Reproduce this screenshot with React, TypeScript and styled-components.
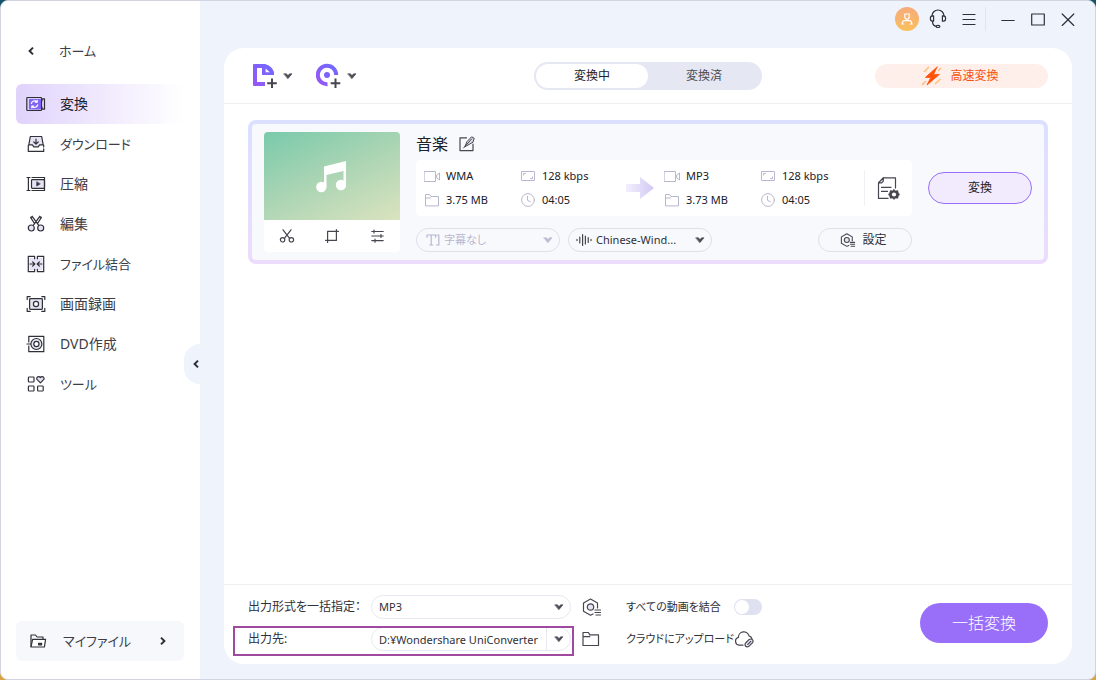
import React, { useState } from "react";
import styled, { createGlobalStyle, css } from "styled-components";

const ink = "#2f3038";
const faint = "#b9b6cf";
const violet = "#996ffa";

const GlobalStyle = createGlobalStyle`
  * { box-sizing: border-box; }
  html, body { margin: 0; }
  body {
    background: linear-gradient(#155468 0 50%, #d9a344 50% 100%);
    color: ${ink};
    font: 12px/16px "Noto Sans", "Noto Sans CJK JP", sans-serif;
    font-feature-settings: "palt";
  }
  button, select, input { font: inherit; color: inherit; font-feature-settings: inherit; }
  button { background: none; border: 0; padding: 0; cursor: pointer; }
  svg { display: block; flex: none; }
  a { color: inherit; text-decoration: none; }
`;

/* ---------- icons ---------- */

type IconProps = { w: number; h: number; color?: string; sw?: number; children: React.ReactNode };

const Icon = ({ w, h, color = ink, sw = 1.2, children }: IconProps) => (
  <svg
    width={w}
    height={h}
    viewBox={`0 0 ${w} ${h}`}
    fill="none"
    stroke={color}
    strokeWidth={sw}
    strokeLinecap="round"
    strokeLinejoin="round"
    aria-hidden="true"
  >
    {children}
  </svg>
);

const tint = "#e6e4f4";

const ConvertIcon = () => (
  <Icon w={20} h={16}>
    <rect x="0.8" y="1.5" width="14.7" height="13" rx="0.8" fill="#d9d0fb" />
    <rect x="3" y="3" width="12" height="10.5" rx="1" fill="#8265f2" stroke="none" />
    <path d="M5.4 7.4a3.2 3 0 0 1 5.6-1.5M11.2 4.4v1.8H9.4M11.6 8.8A3.2 3 0 0 1 6 10.3M5.8 11.8V10h1.8" stroke="#fff" />
    <path d="M15.5 5.5l1-2.7h2V13.2h-2l-1-2.7" />
  </Icon>
);
const DownloadIcon = () => (
  <Icon w={18} h={18}>
    <path d="M3.3 1.5h11.4l1.5 8.3h-3.6l-1.4 2H6.8l-1.4-2H1.8z" fill={tint} />
    <path d="M9 4v5M6.8 7L9 9.2 11.2 7" />
    <path d="M1.3 10v6.4h15.4v-2.6M16.7 12V10" />
  </Icon>
);
const CompressIcon = () => (
  <Icon w={20} h={16}>
    <path d="M1 1.5h3M1 14.5h3M2.4 1.5v13M6 1.5h12M6 14.5h12" />
    <rect x="5.5" y="3.6" width="13" height="8.8" rx="0.8" fill={tint} />
    <path d="M18.5 1.5v13" />
    <path d="M10.7 5.9v4.2L14 8z" fill={ink} strokeWidth="0.6" />
  </Icon>
);
const ScissorsIcon = () => (
  <Icon w={18} h={18}>
    <path d="M5.2 1.4l6.7 9.2M12.8 1.4L6.1 10.6M3.6 2.4l4 6.4M14.4 2.4l-4 6.4M5.2 1.4L3.6 2.4M12.8 1.4l1.6 1" />
    <circle cx="4.3" cy="13" r="3" fill={tint} />
    <circle cx="13.7" cy="13" r="3" fill={tint} />
  </Icon>
);
const MergeIcon = () => (
  <Icon w={18} h={18}>
    <rect x="2.5" y="3" width="13" height="12" fill={tint} stroke="none" />
    <path d="M7.6 3.7V1.3H1.3v15.4h6.3v-2.4M10.4 3.7V1.3h6.3v15.4h-6.3v-2.4" />
    <path d="M3 9h4.4M5.6 6.8L7.8 9l-2.2 2.2M15 9h-4.4M12.4 6.8L10.2 9l2.2 2.2" />
  </Icon>
);
const RecordIcon = () => (
  <Icon w={20} h={18}>
    <rect x="3.6" y="3.6" width="12.8" height="10.8" rx="0.8" fill={tint} />
    <circle cx="10" cy="9" r="2.6" fill="#fff" />
    <path d="M1.2 4.6V1.6h3M15.8 1.6h3v3M18.8 13.4v3h-3M4.2 16.4h-3v-3" />
  </Icon>
);
const DiscIcon = () => (
  <Icon w={20} h={18}>
    <path d="M2.8 7V1.3h15v15.4h-15V11" />
    <circle cx="10.4" cy="9" r="5.5" fill={tint} />
    <circle cx="10.4" cy="9" r="2.6" fill="#fff" />
    <path d="M1 9h3.4" />
  </Icon>
);
const ToolsIcon = () => (
  <Icon w={18} h={18}>
    <rect x="1.4" y="2" width="5.6" height="5" rx="0.8" />
    <rect x="1.4" y="11" width="5.6" height="5" rx="0.8" />
    <rect x="10.6" y="11" width="5.6" height="5" rx="0.8" />
    <path d="M13.4 7.8L10 4.4c-.8-1.4.3-2.8 1.7-2.8.8 0 1.4.5 1.7 1 .3-.5.9-1 1.7-1 1.4 0 2.5 1.4 1.7 2.8z" fill={tint} />
  </Icon>
);
const OpenFolderIcon = () => (
  <Icon w={18} h={16}>
    <path d="M2 13.5V2h4.5l1.6 2H14v2.2" />
    <path d="M2 14l1.6-7.6h13L15.4 14z" fill="#fff" />
    <path d="M9.6 10.4h3v1.4h-3z" fill={ink} />
  </Icon>
);
const Chevron = ({ dir }: { dir: "left" | "right" }) => (
  <Icon w={8} h={10} sw={2}>
    <path d={dir === "left" ? "M6 1.6L2.600 5 6 8.400" : "M2 1.600L5.400 5 2 8.400"} strokeLinecap="butt" strokeLinejoin="miter" />
  </Icon>
);
const Caret = ({ color = "#45464f" }: { color?: string }) => (
  <Icon w={10} h={8} color={color} sw={0.6}>
    <path d="M1 1.8h2.2L5 3.4l1.8-1.6H9L5 6.6z" fill={color} />
  </Icon>
);
const AddFileIcon = () => (
  <Icon w={26} h={26} color="#8a5cf6" sw={4}>
    <defs>
      <linearGradient id="violetBlue" x1="0" y1="1" x2="1" y2="0">
        <stop offset="0" stopColor="#9a55f6" />
        <stop offset="1" stopColor="#6d6bff" />
      </linearGradient>
    </defs>
    <path d="M1 2q0-1 1-1h11q7 2 9 8v3h-12V5H5v14h8v4H2q-1 0-1-1z" fill="url(#violetBlue)" stroke="none" />
    <path d="M13.6 5.6v3.6h4.2z" fill="#fff" stroke="none" />
    <path d="M20 15.5v9.5M15.2 20.2h9.6" stroke="#45464f" strokeWidth="2" strokeLinecap="butt" />
  </Icon>
);
const AddDiscIcon = () => (
  <Icon w={26} h={26} sw={4}>
    <path d="M11.500 21.2A9.200 9.200 0 1 1 20.200 12" stroke="url(#violetBlue)" strokeLinecap="butt" />
    <circle cx="11" cy="12" r="3" fill="#7d62fa" stroke="none" />
    <path d="M19.500 15.5v9.5M14.700 20.2h9.6" stroke="#45464f" strokeWidth="2" strokeLinecap="butt" />
  </Icon>
);
const BoltIcon = () => (
  <Icon w={20} h={20}>
    <path d="M15 1L3.4 11.4h5.4L5 19 17.4 8.4h-5.6z" fill="#ff5208" stroke="#ff5208" strokeWidth="0.800" />
    <path d="M6.5 1.5l-4 4M18.5 2.5l-2 2M18 13.5l-4.5 4M3.5 15.5l-3 3" stroke="#ffbe7d" strokeWidth="1.6" />
  </Icon>
);
const UserIcon = () => (
  <Icon w={12} h={12} color="#fff">
    <path d="M3.8 1h4.4v3.6L7 6.2H5L3.8 4.6zM1.2 11c0-2.2.8-3.4 2.6-3.4h4.4c1.8 0 2.6 1.2 2.6 3.4M.8 11h2M9.2 11h2" />
  </Icon>
);
const HeadsetIcon = () => (
  <Icon w={18} h={20}>
    <path d="M3 7.2V6.8a6 5.8 0 0 1 12 0v.4" />
    <path d="M4.6 6.8v5.4H3.4a2 2.7 0 0 1 0-5.4zM13.4 6.8v5.4h1.2a2 2.7 0 0 0 0-5.4z" />
    <path d="M3.4 12.400c.2 3 1.800 4.800 4 5" />
    <ellipse cx="9" cy="17.4" rx="1.9" ry="1.1" />
  </Icon>
);
const MenuIcon = () => (
  <Icon w={14} h={13}>
    <path d="M1 1.500h12M1 6.500h12M1 11.500h12" />
  </Icon>
);
const MinimizeIcon = () => (
  <Icon w={14} h={14}>
    <path d="M.8 8.5h12.400" />
  </Icon>
);
const MaximizeIcon = () => (
  <Icon w={14} h={14}>
    <rect x="0.7" y="2" width="12.6" height="11" />
  </Icon>
);
const CloseIcon = () => (
  <Icon w={14} h={14}>
    <path d="M1.2 2l11.600 11.500M12.800 2L1.200 13.500" />
  </Icon>
);
const MusicNoteIcon = () => (
  <Icon w={32} h={34}>
    <g fill="#fff" stroke="none">
      <path d="M8 7.500L30 2v24h-2.500V12L10.500 16v12H8z" />
      <circle cx="5.300" cy="28" r="5.200" />
      <circle cx="25" cy="26" r="5.200" />
    </g>
  </Icon>
);
const TrimIcon = () => (
  <Icon w={16} h={14} color="#45464f">
    <path d="M4 .8l6.600 8.600M12 .8L5.400 9.400" />
    <circle cx="3.600" cy="10.800" r="2.200" />
    <circle cx="12.400" cy="10.800" r="2.200" />
  </Icon>
);
const CropIcon = () => (
  <Icon w={14} h={14} color="#45464f">
    <path d="M2.600 13.400V2.400h9M.6 11.400h10.800V.6M11.400 2.400h2" />
  </Icon>
);
const AdjustIcon = () => (
  <Icon w={14} h={14} color="#45464f">
    <path d="M1.800 2.500h11.400M1.800 7h11.400M1.800 11.600h11.400M4 1v3M11 5.500v3M5 10.200v3" />
  </Icon>
);
const EditIcon = () => (
  <Icon w={16} h={16} color="#45464f">
    <path d="M7.600 1.800H1v12.800h13V8" />
    <path d="M6 10.400L8 5.600l4.600-4.800 2.600 1.400-1.200 4-4.600 2.600zM6 10.400L12.600 3M6 10.400L4.600 12" fill="#dcdbe6" strokeWidth="1" />
  </Icon>
);
const FormatIcon = () => (
  <Icon w={16} h={14} color={faint} sw={1}>
    <rect x="0.5" y="2.500" width="11" height="10" />
    <path d="M13 5.800l2.500-1.800v7l-2.500-1.800z" />
  </Icon>
);
const SizeIcon = () => (
  <Icon w={16} h={14} color={faint} sw={1}>
    <path d="M1.500 12.500v-11h4l1.500 2h7.500v9zM1.500 5h5" />
  </Icon>
);
const BitrateIcon = () => (
  <Icon w={16} h={14} color={faint} sw={1}>
    <rect x="1.500" y="2.500" width="13" height="9" rx="0.500" />
    <path d="M3.500 6V4.500h2M12.500 8v1.500h-2" />
  </Icon>
);
const ClockIcon = () => (
  <Icon w={16} h={14} color={faint} sw={1}>
    <circle cx="8" cy="7" r="6.400" />
    <path d="M7.500 3.400v4l2.800 1.200" />
  </Icon>
);
const FlowArrow = () => (
  <svg width="32" height="24" viewBox="0 0 32 24" aria-hidden="true">
    <defs>
      <linearGradient id="flow" x1="0" x2="1">
        <stop offset="0" stopColor="#f3effd" />
        <stop offset="1" stopColor="#d2c8f4" />
      </linearGradient>
    </defs>
    <path d="M2 8h14V1l14 11-14 11v-7H2z" fill="url(#flow)" />
  </svg>
);
const FileSettingsIcon = () => (
  <Icon w={24} h={24} color="#45464f">
    <path d="M11 22.400H1.500V6.800L6.300 1.800H18.500V12" />
    <path d="M1.500 6.800l4.800-5v3.400L4.700 6.800z" fill={tint} />
    <path d="M4.500 11.400h9.500M4.500 15.400h6" />
    <path
      d="M17 13.400l1.500 1.600 2.200-.4.600 2.100 1.200 1.800-1.200 1.700-.6 2.100-2.200-.3-1.500 1.500-1.500-1.500-2.200.3-.6-2.100-1.200-1.700 1.200-1.800.6-2.100 2.200.4z"
      fill="#45464f"
      strokeWidth="0.600"
    />
    <circle cx="17" cy="18.500" r="2.100" fill="#fff" stroke="none" />
  </Icon>
);
const SubtitleIcon = () => (
  <Icon w={14} h={12} color={faint}>
    <path d="M1 3.200V1h8.600v2.200M5.200 1v10M3.800 11h3M10.800 1h2v10h-2.400" />
  </Icon>
);
const AudioIcon = () => (
  <Icon w={16} h={14} color="#45464f">
    <path d="M1 6.400v1.200M3.800 4v6M6.600 1.600v10.800M9.400 3v8M12.200 4.600v4.800M15 6.400v1.200" />
  </Icon>
);
const HexSettingsIcon = ({ size = 14 }: { size?: number }) => (
  <svg
    width={size + 2}
    height={size}
    viewBox="0 0 20 18"
    fill="none"
    stroke="#45464f"
    strokeWidth={size > 16 ? 1.2 : 1.4}
    strokeLinecap="round"
    strokeLinejoin="round"
    aria-hidden="true"
  >
    <path d="M11 16l-2.500 1.200-7-4V5l7-4 7 4v5" />
    <circle cx="8.500" cy="9" r="3.200" fill={tint} />
    <path d="M13 12h5.500M13 14.500h5.500M14 17h4.500" />
  </svg>
);
const FolderIcon = () => (
  <Icon w={18} h={16} color="#45464f">
    <path d="M1 14.500v-13h5.400l1.400 2.400H16.500v10.600zM1 5.600h6.800" />
  </Icon>
);
const CloudIcon = () => (
  <Icon w={20} h={18} color="#45464f">
    <path d="M9 15.200H5a4 4 0 0 1-.6-7.800 5.400 5.400 0 0 1 10.600-1.600 4 4 0 0 1 3 3" />
    <path d="M11.600 13l3.400-3.400q2-1.200 3.400 0 1.300 1.500 0 3.200L15 16.200q-2 1.200-3.400 0-1.200-1.600 0-3.200zM13.800 14.400l3-3" fill={tint} />
  </Icon>
);

/* ---------- window ---------- */

const Window = styled.div`
  display: flex;
  min-height: 100vh;
  border: 1px solid #d3d3e2;
  border-radius: 8px;
  background: #eff3fb;
  overflow: hidden;
`;

const Sidebar = styled.aside`
  position: relative;
  flex: none;
  display: flex;
  flex-direction: column;
  width: 199px;
  padding: 30px 16px 18px 15px;
  background: #fff;
  color: #3c3d47;
  font-size: 14px;
  line-height: 20px;
`;

const BackLink = styled.a`
  display: flex;
  align-items: center;
  gap: 24px;
  height: 40px;
  padding-left: 11px;
  margin-bottom: 13px;
  font-size: 13px;
`;

const NavLink = styled.a<{ $active?: boolean; $kana?: boolean }>`
  display: flex;
  align-items: center;
  gap: 13px;
  height: 40px;
  padding-left: 9px;
  border-radius: 6px;
  font-size: ${(p) => (p.$kana ? 13 : 14)}px;
  ${(p) => p.$active && css`
    color: #202028;
    background: linear-gradient(90deg, #e0d3fc, #fff);
  `}
`;

const NavIcon = styled.span`
  display: flex;
  justify-content: center;
  width: 22px;
`;

const FilesLink = styled.a`
  display: flex;
  align-items: center;
  gap: 16px;
  height: 40px;
  margin-top: auto;
  padding: 0 17px 0 13px;
  border-radius: 6px;
  background: #f6f8fc;
  font-size: 13px;
  svg:last-child { margin-left: auto; }
`;

const CollapseButton = styled.button`
  position: absolute;
  right: 0;
  top: 343px;
  display: flex;
  align-items: center;
  justify-content: flex-end;
  width: 16px;
  height: 40px;
  border-radius: 20px 0 0 20px;
  background: #eff3fb;
`;

const Main = styled.main`
  flex: 1;
  min-width: 0;
  display: flex;
  flex-direction: column;
  padding: 0 23px 15px 24px;
`;

const TitleBar = styled.header`
  display: flex;
  justify-content: flex-end;
  height: 47px;
  padding-top: 6px;
  margin-right: -8px;
`;

const BarGroup = styled.div<{ $divided?: boolean }>`
  display: flex;
  align-items: center;
  gap: 7px;
  height: 24px;
  ${(p) => p.$divided && css`
    margin-left: 4px;
    padding-left: 10px;
    border-left: 1px solid #e2e5f0;
    gap: 6px;
  `}
`;

const BarButton = styled.button<{ $avatar?: boolean }>`
  display: grid;
  place-items: center;
  width: 24px;
  height: 24px;
  border-radius: 12px;
  ${(p) => p.$avatar && css`background: linear-gradient(#f7aa7c, #f9c05c);`}
`;

const Panel = styled.section`
  flex: 1;
  display: flex;
  flex-direction: column;
  border-radius: 20px;
  background: #fff;
`;

/* ---------- toolbar ---------- */

const Toolbar = styled.div`
  display: grid;
  grid-template-columns: 1fr 228px 1fr;
  align-items: center;
  height: 56px;
  padding: 0 24px;
  border-bottom: 1px solid #f0f0f4;
`;

const AddGroup = styled.div`
  display: flex;
  gap: 23px;
  padding-left: 4px;
`;

const AddButton = styled.button`
  display: flex;
  align-items: center;
  gap: 5px;
`;

const Segments = styled.div`
  display: flex;
  height: 28px;
  padding: 2px;
  border-radius: 14px;
  background: #e5e7f2;
`;

const Segment = styled.button<{ $active: boolean }>`
  flex: 1;
  border-radius: 12px;
  background: ${(p) => (p.$active ? "#fff" : "transparent")};
  color: ${(p) => (p.$active ? "#202028" : "#4a4b57")};
`;

const SpeedButton = styled.button`
  display: flex;
  align-items: center;
  justify-content: center;
  gap: 8px;
  justify-self: end;
  width: 173px;
  height: 24px;
  padding-right: 2px;
  border-radius: 12px;
  background: #ffefea;
  color: #f5520f;
`;

/* ---------- file card ---------- */

const FileList = styled.div`
  flex: 1;
  padding: 16px 24px;
`;

const Card = styled.article`
  display: flex;
  gap: 16px;
  padding: 8px 12px;
  border: 4px solid transparent;
  border-radius: 8px;
  background:
    linear-gradient(#f7f9fc, #f7f9fc) padding-box,
    linear-gradient(#dbe0ff, #eddcfc) border-box;
`;

const Preview = styled.div`
  width: 136px;
  border-radius: 4px;
  background: #fff;
  overflow: hidden;
`;

const Cover = styled.div`
  display: grid;
  place-items: center;
  height: 88px;
  background: linear-gradient(155deg, #7ecbac 5%, #acd5b4 50%, #dbe3bf);
`;

const PreviewTools = styled.div`
  display: flex;
  justify-content: space-around;
  align-items: center;
  height: 32px;
`;

const Info = styled.div`
  flex: 1;
  min-width: 0;
`;

const FileTitle = styled.div`
  display: flex;
  align-items: center;
  gap: 11px;
  height: 24px;
  margin-bottom: 4px;
  h2 { margin: 0; font-size: 16px; line-height: 24px; font-weight: 400; color: #202028; }
`;

const Details = styled.div`
  display: flex;
  align-items: center;
  height: 56px;
  margin-bottom: 12px;
  padding-left: 8px;
  border-radius: 4px;
  background: #fff;
`;

const Facts = styled.div`
  flex: 1;
  display: grid;
  grid-template-columns: 96px 1fr 40px 96px 1fr;
  grid-auto-flow: column;
  grid-template-rows: 24px 24px;
`;

const Fact = styled.span`
  display: flex;
  align-items: center;
  gap: 6px;
  color: #202028;
  font-size: 11px;
  line-height: 18px;
`;

const FlowCell = styled.span`
  grid-row: span 2;
  align-self: center;
`;

const FileSettings = styled.button`
  display: grid;
  place-items: center;
  width: 48px;
  height: 36px;
  border-left: 1px solid #f0f0f5;
`;

const OptionRow = styled.div`
  display: flex;
  gap: 8px;
`;

const Pill = styled.span<{ $muted?: boolean; $width?: number }>`
  display: flex;
  align-items: center;
  width: ${(p) => (p.$width ? `${p.$width}px` : "auto")};
  height: 24px;
  padding: 0 6px 0 ${(p) => (p.$muted ? 9 : 7)}px;
  gap: 4px;
  border: 1px solid ${(p) => (p.$width ? "#dfe0ea" : "#e6e9f0")};
  border-radius: 12px;
  color: ${(p) => (p.$muted ? faint : ink)};
  font-size: 11px;
`;

const Picker = styled.select`
  appearance: none;
  flex: 1;
  min-width: 0;
  height: 22px;
  padding: 0;
  border: 0;
  background: none;
  &:disabled { opacity: 1; }
`;

const SettingsButton = styled.button`
  display: flex;
  align-items: center;
  justify-content: center;
  gap: 6px;
  width: 94px;
  height: 24px;
  margin-left: auto;
  padding-right: 3px;
  border: 1px solid #dfe0ea;
  border-radius: 12px;
`;

const ConvertButton = styled.button`
  align-self: center;
  width: 104px;
  height: 32px;
  margin-bottom: 8px;
  border: 1px solid ${violet};
  border-radius: 16px;
  background: #f1ebfd;
  color: #202028;
`;

/* ---------- footer ---------- */

const Footer = styled.footer`
  display: flex;
  align-items: center;
  justify-content: space-between;
  padding: 10px 24px 13px;
  border-top: 1px solid #f0f0f4;
`;

const FooterRows = styled.div`
  display: grid;
  gap: 8px;
`;

const FooterRow = styled.div`
  display: flex;
  align-items: center;
  height: 24px;
`;

const Field = styled.div<{ $marked?: boolean }>`
  position: relative;
  display: grid;
  grid-template-columns: 123px 200px;
  align-items: center;
  ${(p) => p.$marked && css`
    &::after {
      content: "";
      position: absolute;
      inset: -1px -3px -5px -15px;
      border: 2px solid #a04a9f;
      pointer-events: none;
    }
  `}
`;

const PathInput = styled.input`
  flex: 1;
  min-width: 0;
  height: 22px;
  padding: 0;
  border: 0;
  background: none;
`;

const PathButton = styled.button`
  display: grid;
  place-items: center;
  width: 18px;
  height: 22px;
  padding-left: 7px;
  border-left: 1px solid #e6e9f0;
`;

const RowButton = styled.button`
  width: 55px;
  padding-left: 11px;
`;

const RowLabel = styled.label`
  width: 108px;
  white-space: nowrap;
  font-size: 11px;
`;

const Toggle = styled.input`
  appearance: none;
  width: 28px;
  height: 16px;
  margin: 0;
  padding: 1px;
  border-radius: 8px;
  background: #dfe0f0;
  &::before {
    content: "";
    display: block;
    width: 14px;
    height: 14px;
    border-radius: 7px;
    background: #fff;
  }
  &:checked { background: ${violet}; }
  &:checked::before { margin-left: 12px; }
`;

const BatchButton = styled.button`
  width: 128px;
  height: 40px;
  border-radius: 20px;
  background: ${violet};
  color: #fff;
  font-size: 16px;
  font-weight: 300;
`;

const navItems = [
  { label: "変換", icon: <ConvertIcon /> },
  { label: "ダウンロード", icon: <DownloadIcon />, kana: true },
  { label: "圧縮", icon: <CompressIcon /> },
  { label: "編集", icon: <ScissorsIcon /> },
  { label: "ファイル結合", icon: <MergeIcon />, kana: true },
  { label: "画面録画", icon: <RecordIcon /> },
  { label: "DVD作成", icon: <DiscIcon /> },
  { label: "ツール", icon: <ToolsIcon />, kana: true },
];

export default function App() {
  const [tab, setTab] = useState(0);
  const [merge, setMerge] = useState(false);

  return (
    <>
      <GlobalStyle />
      <Window>
        <Sidebar>
          <BackLink href="#home"><Chevron dir="left" />ホーム</BackLink>
          <nav>
            {navItems.map((item, i) => (
              <NavLink key={item.label} href="#nav" $active={i === 0} $kana={item.kana}>
                <NavIcon>{item.icon}</NavIcon>
                {item.label}
              </NavLink>
            ))}
          </nav>
          <FilesLink href="#files">
            <OpenFolderIcon />
            マイファイル
            <Chevron dir="right" />
          </FilesLink>
          <CollapseButton aria-label="サイドバーを閉じる"><Chevron dir="left" /></CollapseButton>
        </Sidebar>

        <Main>
          <TitleBar>
            <BarGroup>
              <BarButton $avatar aria-label="アカウント"><UserIcon /></BarButton>
              <BarButton aria-label="サポート"><HeadsetIcon /></BarButton>
              <BarButton aria-label="メニュー"><MenuIcon /></BarButton>
            </BarGroup>
            <BarGroup $divided>
              <BarButton aria-label="最小化"><MinimizeIcon /></BarButton>
              <BarButton aria-label="最大化"><MaximizeIcon /></BarButton>
              <BarButton aria-label="閉じる"><CloseIcon /></BarButton>
            </BarGroup>
          </TitleBar>

          <Panel>
            <Toolbar>
              <AddGroup>
                <AddButton aria-label="ファイルを追加"><AddFileIcon /><Caret /></AddButton>
                <AddButton aria-label="ディスクを追加"><AddDiscIcon /><Caret /></AddButton>
              </AddGroup>
              <Segments>
                {["変換中", "変換済"].map((label, i) => (
                  <Segment key={label} $active={tab === i} onClick={() => setTab(i)}>{label}</Segment>
                ))}
              </Segments>
              <SpeedButton><BoltIcon />高速変換</SpeedButton>
            </Toolbar>

            <FileList>
              <Card>
                <Preview>
                  <Cover><MusicNoteIcon /></Cover>
                  <PreviewTools>
                    <BarButton aria-label="カット"><TrimIcon /></BarButton>
                    <BarButton aria-label="クロップ"><CropIcon /></BarButton>
                    <BarButton aria-label="調整"><AdjustIcon /></BarButton>
                  </PreviewTools>
                </Preview>
                <Info>
                  <FileTitle>
                    <h2>音楽</h2>
                    <button aria-label="名前を編集"><EditIcon /></button>
                  </FileTitle>
                  <Details>
                    <Facts>
                      <Fact><FormatIcon />WMA</Fact>
                      <Fact><SizeIcon />3.75 MB</Fact>
                      <Fact><BitrateIcon />128 kbps</Fact>
                      <Fact><ClockIcon />04:05</Fact>
                      <FlowCell><FlowArrow /></FlowCell>
                      <Fact><FormatIcon />MP3</Fact>
                      <Fact><SizeIcon />3.73 MB</Fact>
                      <Fact><BitrateIcon />128 kbps</Fact>
                      <Fact><ClockIcon />04:05</Fact>
                    </Facts>
                    <FileSettings aria-label="ファイル設定"><FileSettingsIcon /></FileSettings>
                  </Details>
                  <OptionRow>
                    <Pill $muted $width={144}>
                      <SubtitleIcon />
                      <Picker aria-label="字幕" disabled><option>字幕なし</option></Picker>
                      <Caret color={faint} />
                    </Pill>
                    <Pill $width={144}>
                      <AudioIcon />
                      <Picker aria-label="音声"><option>Chinese-Wind...</option></Picker>
                      <Caret />
                    </Pill>
                    <SettingsButton><HexSettingsIcon />設定</SettingsButton>
                  </OptionRow>
                </Info>
                <ConvertButton>変換</ConvertButton>
              </Card>
            </FileList>

            <Footer>
              <FooterRows>
                <FooterRow>
                  <Field>
                    <label htmlFor="format">出力形式を一括指定：</label>
                    <Pill>
                      <Picker id="format"><option>MP3</option></Picker>
                      <Caret />
                    </Pill>
                  </Field>
                  <RowButton aria-label="出力設定"><HexSettingsIcon size={18} /></RowButton>
                  <RowLabel htmlFor="merge">すべての動画を結合</RowLabel>
                  <Toggle id="merge" type="checkbox" checked={merge} onChange={() => setMerge(!merge)} />
                </FooterRow>
                <FooterRow>
                  <Field $marked>
                    <label htmlFor="path">出力先:</label>
                    <Pill>
                      <PathInput id="path" readOnly value="D:¥Wondershare UniConverter 14" />
                      <PathButton aria-label="出力先を選択"><Caret /></PathButton>
                    </Pill>
                  </Field>
                  <RowButton aria-label="フォルダを開く"><FolderIcon /></RowButton>
                  <RowLabel htmlFor="cloud">クラウドにアップロード</RowLabel>
                  <button id="cloud"><CloudIcon /></button>
                </FooterRow>
              </FooterRows>
              <BatchButton>一括変換</BatchButton>
            </Footer>
          </Panel>
        </Main>
      </Window>
    </>
  );
}
